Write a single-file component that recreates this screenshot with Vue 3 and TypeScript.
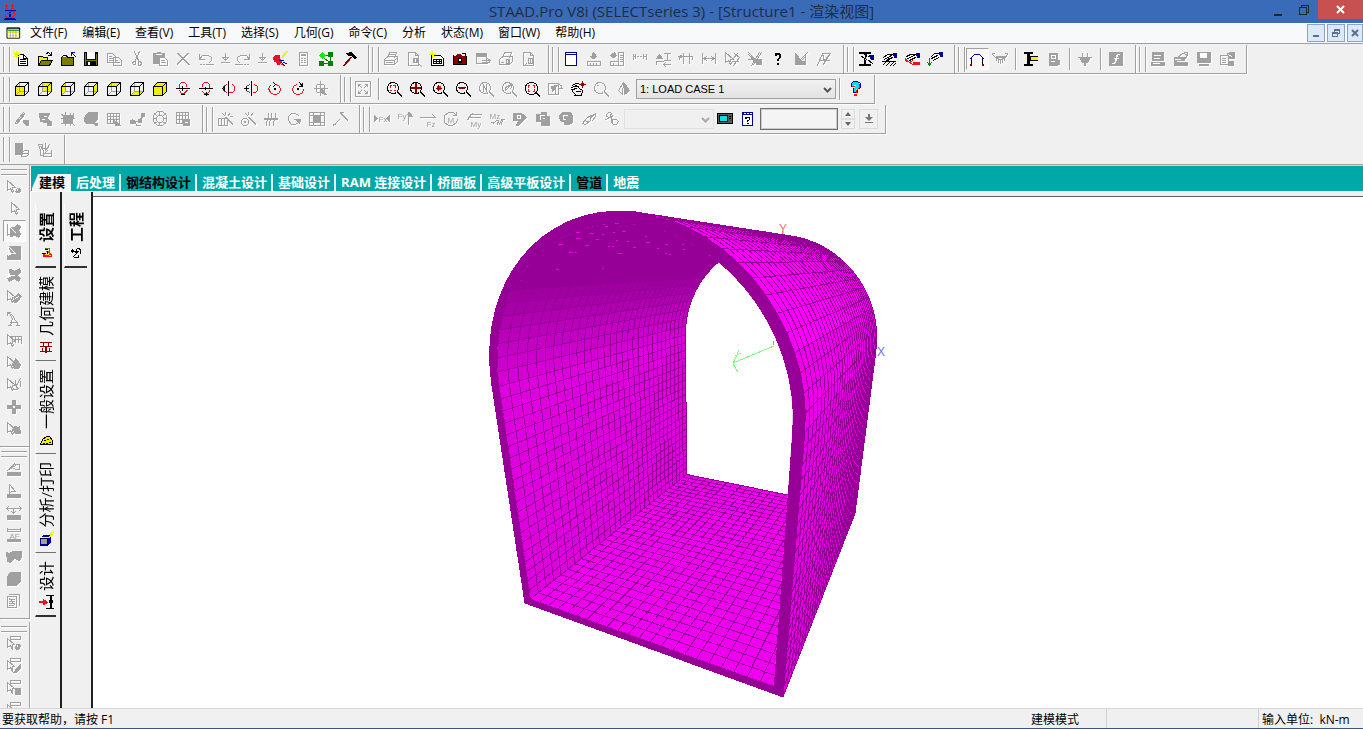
<script setup lang="ts">
import { computed, defineComponent, h, ref } from 'vue'

/* ---------- icon set ----------
   Segments are separated by "|". The first letter picks the colour:
   lower case strokes the path, upper case strokes and fills it,
   "t" places a small label: t<colour> x y text. */
const palette: Record<string, string> = {
  k: '#000000', g: '#a0a0a0', y: '#f0f000', r: '#e8141c', b: '#00009c', c: '#00e0e8',
  n: '#008000', l: '#20e020', o: '#7c7c00', w: '#ffffff', m: '#8c0000', d: '#585858',
}
const box = '|g M5 1V10H14M5 10L1 14|k M1 5H10V14H1ZM1 5L5 1H14L10 5M14 1V10L10 14'
const lens = (extra: string, c = 'k') => `${c} M5 1H8L11 3L12 6V8L10 11L8 12H5L2 10L1 8V5L3 2Z|${c} M11 11L15 15M12 11L15 14|${extra}`
const cursor = 'g M1 1V11L4 9L6 13L7 12L6 8H9Z'
const icons: Record<string, string> = {
  new: 'W M4 3H9L13 7V14H4Z|k M4 3H9L13 7V14H4V3M9 3V7H13M6 8H11M6 10H11M6 12H11|y M0 1L4 5M4 1L0 5M2 0V6M0 3H5',
  open: 'Y M1 5H5L6 6H10V9H4L2 13H1Z|O M4 9H15L12 13H2Z|k M1 14V5H5L6 6H10V8M1 14L4 9H15L12 14ZM9 2L11 1L14 4M14 1V4H11',
  closeFolder: 'O M1 6H12V14H1Z|k M1 14V6L3 4H6L7 6H13V14Z|b M11 1L15 5M11 1H14M11 1V4',
  save: 'K M1 1H14V14H1Z|W M4 1H11V7H4Z|o M2 2V13M13 3V13M2 9H13|K M4 10H11V14H4Z|W M5 11H6V13H5Z',
  copy: 'g M1 2H6L9 5V11H1ZM7 6H12L15 9V14H7ZM3 5H5M3 7H6M3 9H6M9 9H11M9 11H13',
  cut: 'g M5 0L9 9M10 0L6 9M4 10H6V13H4L3 12ZM9 10H11L12 12L11 14H9Z',
  paste: 'G M1 2H12V12H1Z|w M4 3H9|W M7 7H12L15 10V14H7Z|g M7 6H12L15 9V14H7ZM9 9H12M9 11H13M5 1H8',
  del: 'g M2 2L13 13M13 2L2 13M3 2L14 13M12 2L2 12',
  undo: 'g M1 3V8H6M1 8L4 4H10L13 6V9L11 11M2 13H3M5 13H6M8 13H15',
  redo: 'g M14 3V8H9M14 8L11 4H5L2 6V9L4 11M13 13H12M10 13H9M7 13H0',
  down: 'g M8 2V8M5 6L8 9L11 6M6 6H10M7 8H9M4 11H12',
  brush: 'R M1 6L3 4H7V7L9 9L7 13H5L4 10H2Z|y M15 0L10 6M14 0L9 6|b M7 9L11 9M9 11L12 14M11 11L14 12|R M8 12L11 14',
  calc: 'g M4 1H12V14H4ZM6 4H10M6 3H10M6 7H7M9 7H10M6 9H7M9 9H10M6 11H7M9 11H10',
  nodes: 'n M5 4H11M12 5V11M5 12H11M5 6L11 11|N M10 1H14V5H10ZM1 10H5V14H1ZM10 10H14V14H10Z|L M1 4L4 1L7 4L4 7Z',
  hammer: 'm M9 6L2 14M10 6L3 14|K M5 2L10 1L15 6L13 7L10 4L7 4Z',
  print: 'g M4 6L6 1H13L11 6M1 8L4 5H14V10L11 13H1ZM1 9H11V13M11 9L14 6M3 11H9M6 3H11',
  preview: 'g M2 1H9L12 4V14H2ZM9 1V4H12|G M7 7H11V11H7Z|w M9 8V10|g M11 11L15 15',
  report: 'W M2 4H14V14H2Z|k M2 4H11L14 7V14H2ZM4 8H12V12H4ZM7 8V12M10 8V12M4 10H12|y M0 3H6M3 0V6M1 1L5 5',
  camera: 'M M1 5H4L5 3H8L9 5H14V13H1Z|K M6 7H9V11H6Z|W M7 8H8V9H7Z|k M1 4V13H14V5M10 2H13V4',
  exportTable: 'g M1 2H11V12H1ZM1 5H11|G M1 2H11V4H1Z|g M7 9H14M12 7L15 9L12 12M7 11H14',
  printPage: 'g M4 6L6 1H13L11 6M1 8L4 5H14V10L11 13H1ZM3 11H5|G M8 8H11V12H8Z|w M9 9V11',
  pageZoom: 'g M2 1H9L12 4V14H2ZM9 1V4H12M7 7H11V12H7ZM9 7V12M5 12L3 14',
  sheet: 'W M2 1H13V14H2Z|b M2 1H13V14H2ZM2 3H13|w M4 2H5M7 2H8M10 2H11',
  ruler: 'G M7 1L9 3V5H10L8 7H6L4 5H6V3Z|g M1 10H14V14H1ZM4 12V14M7 12V14M10 12V14',
  ruler2: 'G M5 1L7 4L5 6H3L1 4Z|g M1 10H9V14H1ZM9 1H14V14H9ZM11 4H13M11 6H13M11 8H13M11 10H13M4 12V14',
  dimA: 'g M1 3V8M14 3V8M1 5H3M5 5H6M8 5H9M11 5H14M3 3V7M11 3V7',
  dimB: 'G M4 3L7 7H1Z|g M9 2H15M12 2V9M9 9H15M1 10H8M8 13H15M8 13L10 11M8 13L10 15M1 10V13',
  dimC: 'g M1 5H14M5 2V12M11 2V12M1 5V8M14 5V8M3 4L1 5L3 6',
  dimD: 'g M1 2V12M14 2V12M2 7H13M2 7L5 5M2 7L5 9M13 7L10 5M13 7L10 9',
  cut1: cursor + '|g M10 2L15 6L9 14M8 10H14M13 2L9 7',
  cut2: 'G M9 8H14V13H9Z|g M1 1L12 13M1 3L10 13M12 1L4 14M14 1L6 13M1 8H8',
  question: 'k M5 3H9M5 4H6M9 4V6M10 3V6M8 7H9M7 8V9M8 8V9M7 12H8M7 13H8M5 2H9',
  letterM: 'G M2 10H12V13H2Z|G M3 5L7 10H3Z|g M2 10V2L7 8L14 1M3 4L7 9M12 4V10M8 9L12 5',
  letterA: 'g M1 14L6 2H14M6 2L8 10M3 9H10M14 2L9 9H13M11 5L7 13',
  beam: 'K M1 1H12V2H1ZM1 13H12V14H1ZM6 3H8V5L6 8V13H8|k M3 5L10 9M9 8L14 12M10 5L14 8|B M11 4H15V8H13Z|W M9 6H11V8H9Z',
  support: 'W M4 5L8 3H12L10 7H5Z|k M2 6L6 3H12M3 8L10 4M5 9L11 6M1 10H14M2 13L4 11M5 14L8 11M9 14L12 11M12 14L14 12M7 7V10|B M12 2H15V6H13Z',
  load: 'W M4 4L8 2H12L10 6H5Z|k M2 5L6 3H12M3 7L10 4M5 9L11 6|R M1 7L4 10H3L1 9ZM9 11H15V13H9Z|r M1 8L8 13M5 11L8 9|B M12 2H15V6H13Z',
  member: 'W M5 4L8 2H12L10 6H5Z|k M4 5L7 2H12M4 7L10 4M6 9L11 6|n M2 7V14M0 11L2 14L4 11M1 12H3|B M12 1H15V5H13Z',
  portal: 'k M2 13V6M13 13V6|b M1 7L5 3H10L14 7M2 6V8M13 6V8|m M1 13H2M13 13H14M1 14H2M13 14H14',
  bridge: 'g M0 3L4 7L8 8L12 7L15 3M0 2H2M13 2H15M4 7V9M6 8V11M8 8V12M10 8V11M12 7V9M3 6H13M4 5H12',
  steel: 'Y M6 5H14V9H6Z|K M1 1H9V2H1ZM1 13H9V14H1ZM4 2H6V13H4Z|k M7 5H14M7 9H14M7 5V9',
  concrete: 'G M3 2H11V14H3Z|w M5 4H9V7H5ZM5 10H8M10 9V10|G M9 9H13V13H9Z|g M6 6H7',
  plug: 'G M3 6H12V8L10 11H5L3 8Z|g M5 2V5M10 2V5M1 6H14M7 11V14M8 11V14',
  func: 'G M1 1H14V14H1Z|w M11 3H9L8 5L6 12H4M6 7H10M9 4L7 11',
  saveA: 'G M2 1H13V9H2Z|w M4 4H10M4 7H9|G M1 11H14V14H1Z|w M3 12H9',
  openA: 'G M1 6H11V14H1Z|g M4 6L9 2L14 3L12 7M11 1L14 1V4|w M2 8L7 8M4 10H13|G M5 11H14V14H5Z',
  saveB: 'G M1 1H14V11H1Z|W M4 2H10V6H4Z|G M3 13H12V14H3Z',
  formA: 'g M1 4H9V13H1ZM3 7H6M3 9H6M3 11H6|G M8 2L11 1H15V7H10Z|w M9 3L12 5|G M9 10H14V14H9Z',
  cubeFront: 'Y M1 5H10V14H1Z' + box,
  cubeBack: 'Y M6 1H14V9H6Z' + box,
  cubeLeft: 'Y M1 6L5 2V10L1 14Z' + box,
  cubeRight: 'Y M11 5L14 2V9L11 13Z' + box,
  cubeTop: 'Y M2 5L5 2H13L10 5Z' + box,
  cubeBottom: 'Y M2 14L5 10H13L10 14Z' + box,
  cubeIso: 'Y M1 5L5 1H14V10L10 14H1Z|k M1 5H10V14H1ZM1 5L5 1H14L10 5M14 1V10L10 14',
  rotXa: 'r M6 1H9L11 3V5M6 1L4 3V6M4 9L6 12H9L11 10V9|R M9 11L12 9|k M1 7H14M6 13H9M7 5V9',
  rotXb: 'r M6 1H9L11 3V6M6 1L4 3V5M4 10L6 12H9L11 10V9|k M1 7H14M8 11V14M6 13H10M7 6V8',
  rotYa: 'r M5 3L2 5V9L5 11M8 11H11L13 9V5L11 3|k M7 0V14M1 7L3 5V9Z',
  rotYb: 'r M5 3L2 5V9L5 11M9 11H11L13 9V5L10 3|k M7 0V14M2 5V9M0 7H4',
  rotZa: 'r M3 4L1 7L3 11L6 13H9L12 11L13 8L12 5L9 3|k M7 7H8M7 8H8M6 1L8 3L6 5',
  rotZb: 'r M6 3L3 5L2 8L3 11L6 13H9L12 11L13 8|k M7 7H8M7 8H8M9 1L12 5M12 2V5H9',
  axisTurn: 'g M7 0V14M1 7H14M4 3H10M3 4V10M11 4V9M4 11H7|G M8 7L13 13H11L8 11Z',
  fitAll: 'g M0 0H15V15H0ZM3 3L6 6M3 5V3H5M12 3L9 6M10 3H12V5M3 12L6 9M3 10V12H5M12 12L9 9M12 10V12H10',
  zoomWin: lens('r M4 4H5M7 4H9M4 9H5M8 9H9M4 5V6M9 5V6'),
  zoomDyn: lens('m M6 2V11M7 2V11M2 6H11M2 7H11'),
  zoomIn: lens('R M5 5H8V8H5Z|m M6 4V9M4 7H9'),
  zoomOut: lens('m M4 6H9M4 7H9M3 6H10'),
  zoomSel: lens('g M5 3V10M8 3V10M5 4L8 9', 'g'),
  zoomPrev: lens('g M4 9V6L8 4H11M8 2L11 4L9 7M5 8L8 5', 'g'),
  zoomExt: 'k M5 1H9L12 3L13 6V8L12 11L9 13H5L2 11L1 8V5L2 3ZM11 11L15 15M12 11L15 14|r M4 4H5M9 4H10M4 10H5M9 10H10M4 5V6M10 5V6M4 9V8M10 9V8',
  zoomLast: 'g M1 2H11V13H1ZM9 2L14 4V7M12 7H15|G M4 5L10 4L5 10Z|g M8 8V12',
  pan: 'k M2 4L5 2H8M1 6L6 4L9 7M2 8L6 7M3 11L1 8M3 11L6 14H11L12 9L9 7M3 5H8M6 10H10M4 14H9|m M12 0V6M9 3H15M11 2H13M11 4H13',
  lensOff: lens('g M4 4H5', 'g'),
  shade: 'g M7 1L2 9L6 13L7 1|G M8 2L13 9L8 13Z',
  help: 'b M4 5V2L6 0H10L13 2V6L10 8V11H6V7|C M5 2L7 1H10L12 3L11 6L8 8V10H7V8L9 4L8 3H6V5H5Z|r M12 3V6L9 9V11M5 5H7|R M7 13H9V14H7Z',
  pen1: 'g M1 11L9 1M2 12L10 2M3 12L10 3M1 12H3|G M9 9H14V14H12L9 11Z',
  mesh1: 'G M2 2H12L10 7L13 11H9L3 10Z|w M7 5H9M5 8H7|G M10 10H14V14H10Z',
  mesh2: 'G M3 4H12V12H3Z|g M1 3L3 4M13 2V6M1 7H14M5 1V14M10 2V14M1 12L4 11M12 12L14 14',
  solid: 'G M1 6L5 1H14V8L10 12H3L1 10Z|w M10 13L14 9|G M11 12H14V14H12Z',
  gridPen: 'g M1 2H13V12H1ZM4 2V12M7 2V12M10 2V12M1 5H13M1 8H13|G M7 8L14 14H9Z',
  joint: 'G M1 9H5V12H1ZM9 8H12V11H9ZM12 2H15V5H12Z|g M1 10H9M3 8L8 14M7 14H11M14 5L10 8',
  wheel: 'g M5 0H10L14 4V10L10 14H5L1 10V4ZM6 4H9L11 6V9L9 11H6L4 9V6ZM7 0V4M7 11V14M1 7H4M11 7H14M2 2L5 5M13 2L10 5M2 12L5 10M13 12L10 10',
  gridLock: 'g M1 1H13V12H1ZM4 1V12M7 1V12M10 1V12M1 4H13M1 8H13|G M8 8H14V14H8Z|w M10 11H12',
  wand1: 'g M1 7H10V14H1ZM4 7V14M7 7V14M8 6L15 13M9 6L15 12M8 1V3M12 2L11 4M15 5H13M5 2L7 4',
  wand2: 'g M3 7H6L8 9V12L6 14H3L1 12V9ZM4 10H5V11H4ZM8 6L15 13M9 6L15 12M8 1V3M12 2L11 4M5 2L7 4',
  waves: 'g M1 8H14M5 2V5L3 11V14M8 2V5L6 11V14M12 2V5L10 11V14M1 7H14',
  turn: 'g M12 4L9 2H5L2 5V9L5 13H9L12 11M8 8H13V11|G M9 8H14L13 12Z',
  table: 'g M0 1H15V14H0ZM0 4H15M4 1V14M11 1V14M0 11H15|G M4 4H11V11H4Z',
  split: 'g M1 14L7 8M8 1L9 3M9 3L15 9M10 3L15 8M1 13H3M9 1H11',
  fx: 'G M0 4V10L3 7ZM15 4V10L12 7Z|tg 4 10 Fx',
  fy: 'G M12 1V5H15Z|g M11 1V13M10 3H13|tg 0 7 Fy',
  fz: 'g M0 6H15M12 3L15 6|tg 6 15 Fz',
  mx: 'g M5 1H10L13 4M14 8L13 11L9 14H5L1 11V4L5 1M13 1V4H10|tg 4 11 M',
  my: 'g M2 6H14M4 3H15M1 8L6 2M2 6V8|tg 4 15 My',
  mz: 'g M4 12L7 9H9L8 13M10 13L12 8H15M2 11H5M13 8L12 13|tg 0 7 Mz',
  tagA: 'G M1 2H9L14 6L6 14H4L6 9H1Z|w M5 4H8V7H5Z',
  tagB: 'G M1 3H6V1H11V5H14V14H6V10H1Z|w M5 4H9M5 4V8M8 7H9',
  tagC: 'G M4 1H12L14 4V11L11 13H6V10H3L1 7V4Z|w M5 4H9M5 4V8H7',
  leaf: 'g M1 12L6 6L10 4L9 9L4 13ZM9 6L14 2V5L11 9M4 9L7 11',
  link: 'g M4 1L2 3V5L5 6L8 4L6 1ZM6 3L8 12M8 8H12L14 10L12 13H9L7 11ZM1 8L8 5',
  tv: 'K M0 2H15V12H0Z|D M1 3H14V11H1Z|K M2 4H10V10H2Z|C M3 5H9V9H3Z|k M12 5H13M12 7H13',
  askDoc: 'W M2 1H12V14H2Z|b M2 1H12V14H2ZM2 2H12M2 3H12|w M4 2H5M7 2H8M10 2H11|k M5 6H9M9 7V8M7 9H8M7 10V10M7 12H8M5 7H6',
  pageStack: 'G M1 1H8V12H1Z|w M9 8H13|g M7 10L10 8H14V12L12 14H7ZM9 11H13',
  tools: 'g M1 2H5V4H3L6 8V13H3V8ZM8 1V7M5 5L8 7L11 5M12 2L8 8M10 8L7 11H14V14H6M14 8V11',
  curBall: cursor + '|G M11 9H13L14 11L13 13H11L9 12Z|w M11 10V11',
  cur: 'g M5 1V11L8 9L10 13L11 12L10 8H13Z',
  curMesh: 'G M4 4H8L11 1L14 3L12 7L14 11L12 14L9 12L4 13Z|w M3 3L9 9M3 3V10|g M1 1V12L4 10',
  curSolid: 'G M4 1H14V14H1V10H6L2 1Z|w M2 1V10L5 8H9Z',
  curQuad: 'G M2 2H5L8 4L13 1L14 5L11 8L14 11L12 14L8 11L3 14L1 11L5 8Z|w M2 2V10L5 8H8',
  curPen: cursor + '|G M8 8L12 4L15 7L10 13H8Z|w M9 9L12 7',
  curA: 'g M1 1L6 4M1 1V4M1 1H4M3 2L6 7L4 14M6 4L12 14M4 11H11M10 14H13M2 14H5',
  curRule: cursor + '|g M4 3H15V10M6 3V8M9 3V9M12 3V9M7 6H15',
  curDrop: cursor + '|G M9 3L14 9L12 13H8L6 10Z',
  curBend: cursor + '|g M14 1L10 8L11 12H8M9 3V8L12 11M14 4V9',
  plus: 'G M6 1H9V6H14V9H9V14H6V9H1V6H6Z|w M7 7H8V8H7Z',
  curHand: cursor + '|G M8 5H10V7L13 5L14 12H9L7 9Z',
  barPen: 'G M1 11H14V14H1Z|g M1 9L7 3H13V8H9L6 6M3 8L9 4M8 2L5 6',
  barCur: 'G M1 11H14V14H1Z|g M3 1V10L5 8H9Z',
  barDim: 'G M1 10H14V14H1Z|g M0 3H15M0 3L2 1M0 3L2 5M15 3L13 1M15 3L13 5M7 3V8M5 6L7 8L9 6',
  barAf: 'g M1 1V4H14V1M1 2H14|G M1 12H14V14H1Z|tg 3 11 AF',
  flag: 'G M0 3L3 4L6 2H15V7L13 11L8 9L4 13L1 12Z',
  block: 'G M1 5L4 1H14V10L10 14H1Z',
  pages: 'g M1 3H10V14H1ZM3 1H13V12M3 6H8M3 8L8 8M3 10H8M3 12H7M3 5L8 11',
  selBall: 'g M4 0H14V3H4Z|g M1 2V11L4 9L6 13L6 8H8Z|G M10 8H13L14 10L12 13H10L9 11Z|w M11 9V10',
  selHalf: 'g M4 0H14V3H4Z|g M1 2V11L4 9L6 13L6 8H8Z|G M14 6V10L10 14H7Z',
  selSq: 'g M4 0H14V3H4Z|g M1 2V11L4 9L6 13L6 8H8Z|G M9 8H14V14H9Z',
  setupIc: 'R M5 9H13V11H5Z|y M6 12H12M5 8L12 10|o M7 3H11V6H8L12 8|k M4 8H7M7 4H9M9 6V8',
  jobIc: 'k M3 5H5M4 4V7M3 6H5M6 6H10M8 4V8M9 3H11M12 5V8M11 4H12M7 9L5 11M6 12H9M10 10V12M7 7H9',
  geoIc: 'm M2 3H13M5 3V7M10 3V7M2 7H13M7 7V13M8 7V13M2 12H13M4 9V12M11 9V12',
  genIc: 'Y M2 12L4 7L8 4H11L14 8V12Z|k M2 12L4 7L8 4H11L14 8V12ZM6 8H7M9 7H10M11 10H12M8 11H9M5 11H6',
  anaIc: 'B M2 7L5 4H12V11L9 14H2Z|w M3 6H10|G M3 8H8V12H3Z|y M15 0L11 3H14L9 7|k M2 7H9V14',
  desIc: 'k M8 1H15M8 14H15M12 1V14M13 1V14|K M11 6H14V8H11Z|R M1 7H6V8H1ZM5 5L9 8L5 10Z',
  appIc: 'b M3 6H13M3 14H12M2 15H13M7 6V14M8 6V14|r M4 0V4M10 0V4M3 2H5M9 2H11M3 4H5M9 4H11M7 7H10L12 8V11L9 13H4L3 11M5 9H9',
  docIc: 'W M0 2H13V13H0Z|k M0 2H13V13H0ZM0 3H13|y M1 7H12M1 10H12M1 12H12|n M1 5H12|g M3 6V12M6 6V12M9 6V12',
}

interface Seg { d?: string; fill: string; stroke: string; x?: number; y?: number; text?: string }
const parse = (src: string): Seg[] =>
  src.split('|').map((raw) => {
    if (raw[0] === 't') {
      const [c, x, y, text] = raw.slice(1).split(' ')
      return { fill: palette[c], stroke: 'none', x: +x, y: +y, text }
    }
    const c = raw[0]
    const colour = palette[c.toLowerCase()]
    return { d: raw.slice(2), stroke: colour, fill: c === c.toUpperCase() ? colour : 'none' }
  })

const Ico = defineComponent({
  props: { name: { type: String, required: true } },
  setup(props) {
    return () => {
      const src = icons[props.name]
      const dim = src.split('|').every((s) => /^(t?g|G|w|W)/.test(s))
      return h(
        'svg',
        { class: ['ico', dim && 'dim'], width: 16, height: 16, viewBox: '0 0 16 16', 'aria-hidden': 'true' },
        [h('g', { transform: 'translate(.5 .5)', 'shape-rendering': 'crispEdges' },
          parse(src).map((s) => s.text
            ? h('text', { x: s.x, y: s.y, fill: s.fill, class: 'ico-label' }, s.text)
            : h('path', { d: s.d, fill: s.fill, stroke: s.stroke, 'stroke-linecap': 'square' })))],
      )
    }
  },
})

/* ---------- toolbars: "|" separator, "*" pressed, "~" narrow ---------- */
const list = (s: string) => s.split(' ')
const row1 = [
  list('new open closeFolder save copy cut paste del undo ~down redo ~down brush calc nodes hammer'),
  list('print preview report camera exportTable printPage pageZoom'),
  list('sheet ruler ruler2 dimA dimB dimC dimD cut1 cut2 question letterM letterA'),
  list('beam support load member'),
  list('*portal bridge | steel concrete | plug | func'),
  list('saveA openA saveB formA'),
]
const row2a = list('cubeFront cubeBack cubeLeft cubeRight cubeTop cubeBottom cubeIso rotXa rotXb rotYa rotYb rotZa rotZb axisTurn')
const row2b = list('fitAll | zoomWin zoomDyn zoomIn zoomOut zoomSel zoomPrev zoomExt zoomLast pan lensOff shade')
const row3a = list('pen1 mesh1 mesh2 solid gridPen joint wheel gridLock')
const row3b = list('wand1 wand2 waves turn table split')
const row3c = list('fx fy fz mx my mz tagA tagB tagC leaf link')
const row4 = list('pageStack tools')
const side = [
  list('curBall cur *curMesh curSolid curQuad curPen curA curRule curDrop curBend plus curHand'),
  list('barPen barCur barDim barAf flag block pages'),
  list('selBall selHalf selSq selBall'),
]

const Tools = defineComponent({
  props: { items: { type: Array as () => string[], required: true } },
  setup(props) {
    return () => props.items.map((it) => {
      if (it === '|') return h('span', { class: 'vsep' })
      const name = it.replace(/^[*~]/, '')
      return h('button', {
        type: 'button',
        class: ['tb', it[0] === '*' && 'on', it[0] === '~' && 'narrow'],
        'aria-label': name,
      }, [h(Ico, { name })])
    })
  },
})

const menus = ['文件(F)', '编辑(E)', '查看(V)', '工具(T)', '选择(S)', '几何(G)', '命令(C)', '分析', '状态(M)', '窗口(W)', '帮助(H)']
const tabs = [
  { t: '建模' }, { t: '后处理' }, { t: '钢结构设计', dark: true }, { t: '混凝土设计' }, { t: '基础设计' },
  { t: 'RAM 连接设计' }, { t: '桥面板' }, { t: '高级平板设计' }, { t: '管道', dark: true }, { t: '地震' },
]
const activeTab = ref(0)
const pages = [
  { t: '设置', i: 'setupIc' }, { t: '几何建模', i: 'geoIc' }, { t: '一般设置', i: 'genIc' },
  { t: '分析/打印', i: 'anaIc' }, { t: '设计', i: 'desIc' },
]
const activePage = ref(0)
const loadCase = ref('1: LOAD CASE 1')
const field = ref('')

/* ---------- tunnel model, perspective projection ---------- */
type P2 = [number, number]
const A = -0.2051, B = -0.175, C = 0.578
const wallH = 0.92, rise = 1.072
const project = (x: number, y: number, z: number): P2 => {
  const w = 1 + A * x + B * y + C * z
  return [
    (525 - 475 * A * x + 697.5 * B * y + 954 * C * z) / w,
    (603 + 239 * A * x + 1738 * B * y + 261 * C * z) / w,
  ]
}
const WALL = 20, ARC = 32, FLOOR = 22, DEPTH = 30
/* section outline: right wall up, arch over, left wall down, floor back */
const section = (t: number): P2[] => {
  const pts: P2[] = []
  for (let i = 0; i < WALL; i++) pts.push([1 - t, t + ((wallH - t) * i) / WALL])
  for (let i = 0; i < ARC; i++) {
    const a = (Math.PI * i) / ARC
    pts.push([0.5 + (0.5 - t) * Math.cos(a), wallH + (0.5 * rise - t) * Math.sin(a)])
  }
  for (let i = 0; i < WALL; i++) pts.push([t, wallH - ((wallH - t) * i) / WALL])
  for (let i = 0; i <= FLOOR; i++) pts.push([t + ((1 - 2 * t) * i) / FLOOR, t])
  return pts
}
const outer = section(0)
const inner = section(0.03)
const fmt = (p: P2[]) => p.map(([x, y]) => `${x.toFixed(1)} ${y.toFixed(1)}`).join('L')
const ring = (s: P2[], z: number) => `M${fmt(s.map(([x, y]) => project(x, y, z)))}Z`
const area = (p: P2[]) => p.reduce((n, [x, y], i) => {
  const [u, v] = p[(i + 1) % p.length]
  return n + x * v - u * y
}, 0)
const mix = (k: number, hi: number, lo = 150) => {
  const c = Math.round(hi + (lo - hi) * Math.min(1, Math.max(0, k)))
  return `rgb(${c},0,${c})`
}
const build = (s: P2[], sign: number, shade: (i: number) => string) => {
  const strips: { d: string; fill: string }[] = []
  let lines = ''
  for (let i = 0; i < s.length - 1; i++) {
    const quad: P2[] = [project(...s[i], 0), project(...s[i], 1), project(...s[i + 1], 1), project(...s[i + 1], 0)]
    if (area(quad) * sign <= 0) continue
    strips.push({ d: `M${fmt(quad)}Z`, fill: shade(i) })
    lines += `M${fmt([quad[0], quad[1]])}`
    for (let k = 0; k <= DEPTH; k++) lines += `M${fmt([project(...s[i], k / DEPTH), project(...s[i + 1], k / DEPTH)])}`
  }
  return { strips, lines }
}
const model = computed(() => ({
  inside: build(inner, 1, (i) => {
    if (i >= 2 * WALL + ARC) return mix(0, 240)
    if (i >= WALL + ARC) return mix(0, 222)
    return mix((WALL + ARC - i) / 8, 222)
  }),
  outside: build(outer, -1, (i) => (i < WALL ? mix(0, 226) : mix(0, i < WALL + 4 ? 236 : 255))),
  opening: ring(inner, 0),
  face: ring(outer, 0) + ring(inner, 0),
  rim: ring(outer, 0),
  hole: ring(inner, 1),
}))
const specks = 'M605 226h3M576 232h4M589 233h5M602 234h2M576 238h5M596 239h3M613 232h2M622 231h4M616 240h2M558 244h5M585 245h4M608 246h2M612 246h2M627 241h2M633 247h3M645 236h2M646 242h4M657 248h2M665 244h3M665 253h2M669 254h2M569 252h4M575 252h2M617 253h5M682 244h2M683 249h2M556 269h3M602 268h2M521 280h1M656 216h3M666 219h3'
</script>

<template>
  <div class="app">
    <header class="title">
      <Ico name="appIc" class="logo" />
      <h1>STAAD.Pro V8i (SELECTseries 3) - [Structure1 - 渲染视图]</h1>
      <div class="winbtns">
        <button type="button" aria-label="最小化"><svg width="12" height="14" shape-rendering="crispEdges"><path d="M2 11h8v2H2z" fill="#20242c" /></svg></button>
        <button type="button" aria-label="还原"><svg width="12" height="12" shape-rendering="crispEdges"><path d="M1.500 3.500h7v7h-7zM3.500 3V1.500h7v7H9" fill="none" stroke="#20242c" /></svg></button>
        <button type="button" aria-label="关闭" class="close"><svg width="10" height="10"><path d="M1 1l7 7M8 1L1 8" stroke="#fff" stroke-width="2" /></svg></button>
      </div>
    </header>

    <nav class="menu">
      <Ico name="docIc" class="docico" />
      <button v-for="m in menus" :key="m" type="button">{{ m }}</button>
      <div class="mdi">
        <button type="button" aria-label="最小化子窗口"><svg width="12" height="12"><path d="M3 8h6v2H3z" fill="#5c6f8c" /></svg></button>
        <button type="button" aria-label="还原子窗口"><svg width="12" height="12" shape-rendering="crispEdges"><path d="M2.500 5.500h5v4h-5zM4.500 5V2.500h5v4H8M2 6h6M4 3h6" fill="none" stroke="#5c6f8c" /></svg></button>
        <button type="button" aria-label="关闭子窗口"><svg width="12" height="12"><path d="M3 3l6 6M9 3l-6 6" stroke="#5c6f8c" stroke-width="2" /></svg></button>
      </div>
    </nav>

    <div class="bars">
      <div class="row">
        <div v-for="(g, i) in row1" :key="i" class="group"><Tools :items="g" /></div>
      </div>
      <div class="row">
        <div class="group"><Tools :items="row2a" /></div>
        <div class="group">
          <Tools :items="row2b" />
          <div class="combo">
            <select v-model="loadCase" aria-label="荷载工况"><option>1: LOAD CASE 1</option></select>
            <svg class="chev" width="9" height="6"><path d="M1 1l3.500 3.500L8 1" fill="none" stroke="#555" stroke-width="2" /></svg>
          </div>
          <Tools :items="['|', 'help']" />
        </div>
      </div>
      <div class="row">
        <div class="group"><Tools :items="row3a" /></div>
        <div class="group"><Tools :items="row3b" /></div>
        <div class="group">
          <Tools :items="row3c" />
          <div class="combo off">
            <select disabled aria-label="结果"><option></option></select>
            <svg class="chev" width="9" height="6"><path d="M1 1l3.500 3.500L8 1" fill="none" stroke="#aaa" stroke-width="2" /></svg>
          </div>
          <Tools :items="['tv', 'askDoc']" />
          <input v-model="field" class="field" type="text" aria-label="数值" />
          <div class="spin">
            <button type="button" aria-label="增加"><svg width="6" height="4"><path d="M0 4l3-4 3 4z" fill="#666" /></svg></button>
            <button type="button" aria-label="减少"><svg width="6" height="4"><path d="M0 0l3 4 3-4z" fill="#666" /></svg></button>
          </div>
          <button type="button" class="drop" aria-label="应用"><svg width="8" height="10"><path d="M3 0h2v3h3L4 7 0 3h3zM0 8h8v1H0z" fill="#777" /></svg></button>
        </div>
      </div>
      <div class="row">
        <div class="group"><Tools :items="row4" /></div>
      </div>
    </div>

    <div class="body">
      <aside class="side">
        <div v-for="(g, i) in side" :key="i" class="vgroup"><Tools :items="g" /></div>
      </aside>
      <div class="work">
        <div class="tabs" role="tablist">
          <button v-for="(t, i) in tabs" :key="t.t" type="button" role="tab" :aria-selected="i === activeTab"
            :class="{ active: i === activeTab, dark: t.dark }" @click="activeTab = i">{{ t.t }}</button>
        </div>
        <div class="panes">
          <div class="vtabs first">
            <button v-for="(p, i) in pages" :key="p.t" type="button" :class="{ active: i === activePage }" @click="activePage = i">
              <Ico :name="p.i" /><span>{{ p.t }}</span>
            </button>
          </div>
          <div class="vtabs second">
            <button type="button" class="active"><Ico name="jobIc" /><span>工程</span></button>
          </div>
          <main class="canvas">
            <svg viewBox="93 197 1270 511" role="img" aria-label="Structure1">
              <defs><clipPath id="opening"><path :d="model.opening" /></clipPath></defs>
              <g clip-path="url(#opening)" shape-rendering="crispEdges">
                <path :d="model.opening" fill="#960096" />
                <path v-for="(s, i) in model.inside.strips" :key="i" :d="s.d" :fill="s.fill" />
                <path :d="model.inside.lines" class="mesh" />
                <path :d="model.hole" fill="#fff" stroke="#960096" />
              </g>
              <g fill="none" shape-rendering="crispEdges">
                <path d="M774 346L733 363M739 350L733 364L738 372M735 356L741 353" stroke="#7dff7d" />
                <path d="M773 341V345M782 231V236" stroke="#ff7070" />
              </g>
              <g shape-rendering="crispEdges">
                <path v-for="(s, i) in model.outside.strips" :key="i" :d="s.d" :fill="s.fill" />
                <path :d="model.outside.lines" class="mesh" />
                <path :d="model.face" fill="#960096" fill-rule="evenodd" />
                <path :d="model.rim" class="mesh" />
                <path :d="specks" stroke="#e800e8" />
              </g>
              <text x="779" y="233" fill="#ff7070">Y</text>
              <text x="877" y="356" fill="#7070ff">X</text>
            </svg>
          </main>
        </div>
      </div>
    </div>

    <footer class="status">
      <span class="hint">要获取帮助，请按 F1</span>
      <span class="mode">建模模式</span>
      <span class="blank"></span>
      <span class="unit">输入单位:&nbsp; kN-m</span>
    </footer>
  </div>
</template>

<style>
body { margin: 0; }
.ico { display: block; flex: none; overflow: visible; }
.ico.dim { filter: drop-shadow(1px 1px 0 #fff); }
.ico-label { font: 8px "Liberation Sans", sans-serif; }
.tb {
  box-sizing: border-box; flex: none; width: 23px; height: 22px; padding: 0 0 0 2px; border: 1px solid transparent; background: none;
  display: flex; align-items: center; justify-content: flex-start;
}
.tb.narrow { width: 14px; padding: 0; justify-content: center; }
.tb.on { background: #f9f9f9; border-color: #a0a0a0 #fff #fff #a0a0a0; }
.vsep { flex: none; width: 1px; height: 22px; margin: 0 3px; background: #a0a0a0; border-right: 1px solid #fff; }
</style>

<style scoped>
.app {
  height: 100vh; display: flex; flex-direction: column; overflow: hidden; background: #f0f0f0; color: #000;
  font: 12px "Open Sans", "Noto Sans CJK SC", sans-serif;
}
button { font: inherit; color: inherit; box-sizing: border-box; }

.title { flex: none; height: 23px; display: grid; grid-template-columns: 1fr auto 1fr; align-items: center; background: #396bb8; }
.logo { margin-left: 2px; }
.title h1 { margin: 0; font-size: 15px; line-height: 23px; font-weight: 400; color: #1f2d45; white-space: nowrap; }
.winbtns { justify-self: end; align-self: start; display: flex; }
.winbtns button { width: 26px; height: 19px; padding: 0; border: 0; background: none; display: flex; align-items: center; justify-content: center; }
.winbtns .close { width: 45px; margin-left: 1px; background: #c75050; }

.menu { flex: none; height: 20px; display: flex; align-items: center; background: #f8f9fb; border-bottom: 1px solid #a0a0a0; }
.docico { margin: 0 1px 0 7px; width: 15px; }
.menu > button { padding: 0 8px 0 7px; border: 0; background: none; line-height: 20px; white-space: nowrap; }
.mdi { margin-left: auto; display: flex; gap: 2px; }
.mdi button { width: 18px; height: 18px; padding: 0; background: #dde9f8; border: 1px solid #8ba3c4; display: flex; align-items: center; justify-content: center; }
.mdi button:last-child { width: 16px; }

.bars { flex: none; padding-top: 1px; border-bottom: 1px solid #a0a0a0; }
.row { height: 30px; display: flex; }
.row:last-child { height: 29px; }
.group {
  position: relative; box-sizing: border-box; height: 29px; padding: 0 7px 0 11px; display: flex; align-items: center;
  border-right: 1px solid #a0a0a0; border-bottom: 1px solid #a0a0a0; box-shadow: 1px 1px 0 #fff;
}
.row:last-child .group { border-bottom: 0; box-shadow: 1px 0 0 #fff; }
.group::before {
  content: ""; position: absolute; left: 3px; top: 2px; width: 5px; height: 25px;
  border-left: 1px solid #a0a0a0; border-right: 1px solid #a0a0a0; box-shadow: 1px 0 0 #fff, inset 1px 0 0 #fff;
}
.combo { position: relative; width: 200px; height: 20px; }
.combo select {
  appearance: none; box-sizing: border-box; width: 100%; height: 100%; padding: 0 3px; border: 1px solid #a0a0a0; border-radius: 0;
  background: linear-gradient(#f2f2f2, #e2e2e2); font: 11px "Liberation Sans", sans-serif; color: #000; display: block;
}
.combo.off { width: 90px; }
.combo.off select { background: #f0f0f0; border-color: #dcdcdc; }
.chev { position: absolute; right: 4px; top: 8px; }
.field { box-sizing: border-box; width: 78px; height: 22px; margin: 0 3px 0 0; border: 1px solid #707070; background: #f4f4f4; box-shadow: inset 0 0 0 1px #ccc; }
.spin { width: 14px; height: 20px; margin-right: 4px; display: flex; flex-direction: column; }
.spin button { flex: 1; padding: 0; border: 1px solid #dcdcdc; background: #f0f0f0; display: flex; align-items: center; justify-content: center; }
.drop { width: 19px; height: 20px; padding: 0; border: 1px solid #dcdcdc; background: #f0f0f0; display: flex; align-items: center; justify-content: center; }

.body { flex: 1; min-height: 0; display: flex; }
.side { flex: none; width: 31px; overflow: hidden; }
.vgroup {
  position: relative; box-sizing: border-box; width: 30px; padding: 11px 0 6px 3px;
  border-right: 1px solid #a0a0a0; border-bottom: 1px solid #a0a0a0; box-shadow: 1px 1px 0 #fff;
}
.vgroup:last-child { margin-top: 3px; }
.vgroup::before {
  content: ""; position: absolute; left: 1px; top: 4px; width: 26px; height: 4px;
  border-top: 1px solid #a0a0a0; border-bottom: 1px solid #a0a0a0; box-shadow: 0 1px 0 #fff, inset 0 1px 0 #fff;
}
.work { flex: 1; min-width: 0; display: flex; flex-direction: column; }
.tabs { flex: none; box-sizing: border-box; height: 27px; padding: 8px 0 0 1px; display: flex; background: #00a8a8; border-top: 1px solid #d8d8d8; border-bottom: 1px solid #fff; }
.tabs button {
  padding: 0 4px 0 5px; border: 0; border-right: 2px solid #e8f6f6; background: none; color: #fff; white-space: nowrap;
  font: bold 13px/17px "Open Sans", "Noto Sans CJK SC", sans-serif;
}
.tabs button:last-child { border-right: 0; }
.tabs .dark { color: #000; }
.tabs .active { color: #000; padding: 0 6px 0 7px; border-right: 0; background: linear-gradient(113deg, transparent 5px, #f4f4f4 6px); }

.panes { flex: 1; min-height: 0; display: flex; }
.vtabs { flex: none; box-sizing: border-box; padding: 12px 4px 0 4px; display: flex; flex-direction: column; border-right: 2px solid #202020; }
.vtabs.first { width: 31px; }
.vtabs.second { width: 31px; padding-left: 2px; }
.vtabs button {
  padding: 8px 0 5px 0; border: 0; border-bottom: 1px solid #707070; border-left: 1px solid #fff; background: none;
  display: flex; flex-direction: column-reverse; align-items: center; gap: 3px;
}
.vtabs .active { border-bottom: 2px solid #303030; font-weight: 700; }
.vtabs button:last-child { border-bottom: 2px solid #303030; }
.vtabs span { writing-mode: vertical-rl; text-orientation: sideways; transform: rotate(180deg); font-size: 15px; line-height: 18px; white-space: nowrap; }
.canvas { flex: 1; min-width: 0; margin-top: 4px; background: #fff; border-top: 1px solid #606060; }
.canvas svg { display: block; width: 100%; height: 100%; }
.canvas text { font: 12px "Liberation Sans", sans-serif; }
.mesh { fill: none; stroke: #960096; }

.status { flex: none; box-sizing: border-box; height: 21px; display: flex; background: #f0f0f0; border-top: 1px solid #d8d8d8; border-bottom: 1px solid #34558f; line-height: 21px; white-space: nowrap; }
.status span { box-sizing: border-box; }
.hint { flex: 1; padding-left: 2px; }
.mode { width: 75px; }
.blank { width: 153px; border-left: 1px solid #d0d0d0; border-right: 1px solid #d0d0d0; }
.unit { width: 104px; padding-left: 3px; }
</style>
